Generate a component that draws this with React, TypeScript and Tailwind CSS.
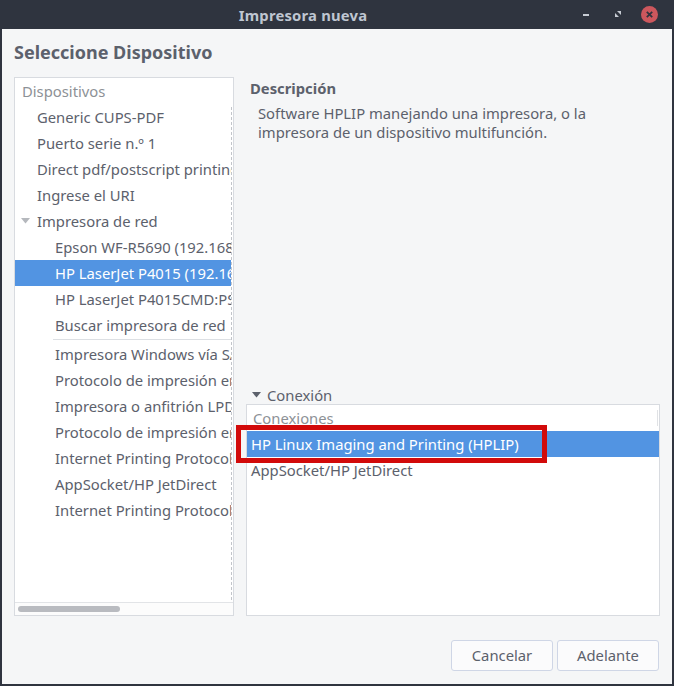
import React from "react";

const font = { fontFamily: '"Noto Sans", "Open Sans", sans-serif' };

type Row = { label: string; level: number; kind?: "header" | "expander" | "selected" | "sep" };

const rows: Row[] = [
  { label: "Dispositivos", level: 0, kind: "header" },
  { label: "Generic CUPS-PDF", level: 1 },
  { label: "Puerto serie n.º 1", level: 1 },
  { label: "Direct pdf/postscript printing", level: 1 },
  { label: "Ingrese el URI", level: 1 },
  { label: "Impresora de red", level: 1, kind: "expander" },
  { label: "Epson WF-R5690 (192.168.1.20)", level: 2 },
  { label: "HP LaserJet P4015 (192.168.1.30)", level: 2, kind: "selected" },
  { label: "HP LaserJet P4015CMD:PS", level: 2 },
  { label: "Buscar impresora de red", level: 2 },
  { label: "", level: 2, kind: "sep" },
  { label: "Impresora Windows vía SAMBA", level: 2 },
  { label: "Protocolo de impresión en línea", level: 2 },
  { label: "Impresora o anfitrión LPD/LPR", level: 2 },
  { label: "Protocolo de impresión en red", level: 2 },
  { label: "Internet Printing Protocol (ipp)", level: 2 },
  { label: "AppSocket/HP JetDirect", level: 2 },
  { label: "Internet Printing Protocol (https)", level: 2 },
];

function Tri({ color = "#8e9297" }: { color?: string }) {
  return (
    <svg width="9" height="6" viewBox="0 0 9 6" className="shrink-0">
      <path d="M0 0 L9 0 L4.5 5.5 Z" fill={color} />
    </svg>
  );
}

export default function App() {
  return (
    <div
      className="w-[674px] h-[686px] bg-[#2f343f] flex flex-col px-[2px] pb-[2px] overflow-hidden"
      style={font}
    >
      {/* title bar */}
      <div className="h-[29px] shrink-0 flex items-center relative">
        <div className="flex-1 text-center text-[14.8px] font-bold text-[#bfc6d1] tracking-[0.2px] pt-[1px] pr-[68px]">
          Impresora nueva
        </div>
        <div className="absolute right-[8px] top-0 h-[29px] flex items-center">
          <div className="w-[36px] flex justify-center">
            <div className="w-[6px] h-[2px] bg-[#c7ccd4]" />
          </div>
          <div className="w-[30px] flex justify-center">
            <svg width="8" height="8" viewBox="0 0 8 8">
              <path d="M2 0 H6 V4 Z" fill="#c7ccd4" />
              <path d="M0 2 V6 H4 Z" fill="#c7ccd4" />
            </svg>
          </div>
          <div className="w-[30px] flex justify-center">
            <div className="w-[17px] h-[17px] rounded-full bg-[#cc575d] flex items-center justify-center">
              <svg width="7" height="7" viewBox="0 0 7 7">
                <path d="M0.8 0.8 L6.2 6.2 M6.2 0.8 L0.8 6.2" stroke="#2f343f" strokeWidth="1.8" />
              </svg>
            </div>
          </div>
        </div>
      </div>

      {/* content */}
      <div className="flex-1 bg-[#f5f6f7] flex flex-col px-[12px]">
        <div className="pt-[11px] h-[35px] leading-[24px] text-[18px] font-bold text-[#5c616c]">
          Seleccione Dispositivo
        </div>
        <div className="h-[13px]" />

        <div className="h-[539px] flex gap-[12px]">
          {/* left tree */}
          <div className="w-[220px] h-full border border-[#d8dbe0] bg-white flex flex-col">
            <div className="flex-1 relative overflow-hidden">
              <div className="w-[216px] overflow-hidden">
                {rows.map((r, i) => {
                  if (r.kind === "sep") {
                    return (
                      <div key={i} className="h-[2px] pl-[38px]">
                        <div className="h-[1px] bg-[#dcdfe3] mt-[1px]" />
                      </div>
                    );
                  }
                  const pl = r.level === 0 ? 7 : r.level === 1 ? 22 : 40;
                  const selected = r.kind === "selected";
                  return (
                    <div
                      key={i}
                      className={
                        "h-[26px] flex items-center whitespace-nowrap text-[14.8px] " +
                        (selected ? "bg-[#5294e2] text-white " : "") +
                        (r.kind === "header" ? "text-[#8d9196] " : selected ? "" : "text-[#5c616c] ")
                      }
                      style={{ paddingLeft: r.kind === "expander" ? 6 : pl }}
                    >
                      {r.kind === "expander" && (
                        <span className="mr-[7px] flex items-center">
                          <Tri color="#b5b8bd" />
                        </span>
                      )}
                      {r.label}
                    </div>
                  );
                })}
              </div>
              <div className="absolute left-[216px] top-[29px] bottom-[2px] border-l border-dashed border-[#c2c5ca]" />
            </div>
            <div className="h-[13px] border-t border-[#e2e4e7] bg-[#fcfcfc] flex items-center pl-[3px]">
              <div className="w-[102px] h-[6px] rounded-full bg-[#b9bbc0]" />
            </div>
          </div>

          {/* right column */}
          <div className="flex-1 flex flex-col">
            <div className="pl-[4px] pt-[1px] h-[21px] leading-[20px] text-[14.8px] font-bold text-[#5c616c]">
              Descripción
            </div>
            <div className="pl-[12px] mt-[6px] text-[14.8px] leading-[19px] text-[#5c616c] pr-[60px]">
              Software HPLIP manejando una impresora, o la impresora de un dispositivo multifunción.
            </div>
            <div className="flex-1" />
            <div className="h-[18px] flex items-center pl-[6px] text-[14.8px] text-[#5c616c]">
              <span className="mr-[6px] flex items-center">
                <Tri color="#5c616c" />
              </span>
              Conexión
            </div>
            <div className="h-[212px] border border-[#d8dbe0] bg-white relative">
              <div className="h-[26px] flex items-center pl-[6px] text-[14.8px] text-[#8d9196]">Conexiones</div>
              <div className="h-[26px] flex items-center pl-[4px] text-[14.8px] text-white bg-[#5294e2] whitespace-nowrap">
                HP Linux Imaging and Printing (HPLIP)
              </div>
              <div className="h-[26px] flex items-center pl-[4px] text-[14.8px] text-[#5c616c] whitespace-nowrap">
                AppSocket/HP JetDirect
              </div>
              <div className="absolute right-[1px] top-[5px] h-[16px] w-[1px] bg-[#e0e2e5]" />
              <div className="absolute left-[-11px] top-[20px] w-[311px] h-[38px] border-[5px] border-[#d20a0a]" />
            </div>
          </div>
        </div>

        <div className="h-[24px]" />
        <div className="h-[31px] flex justify-end gap-[4px] pr-[1px]">
          <button className="w-[102px] h-[31px] rounded-[3px] border border-[#cfd6e6] bg-[#fbfbfc] text-[14.8px] text-[#5c616c]">
            Cancelar
          </button>
          <button className="w-[102px] h-[31px] rounded-[3px] border border-[#cfd6e6] bg-[#fbfbfc] text-[14.8px] text-[#5c616c]">
            Adelante
          </button>
        </div>
        <div className="h-[13px]" />
      </div>
    </div>
  );
}
